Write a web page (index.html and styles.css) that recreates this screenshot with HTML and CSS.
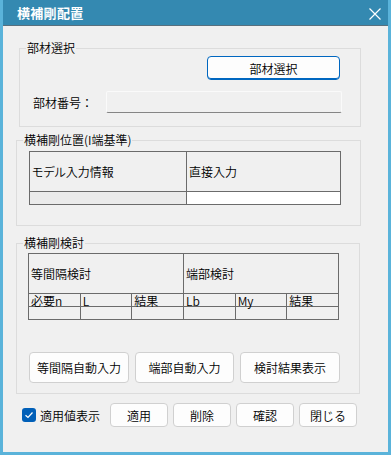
FILE: index.html
```html
<!DOCTYPE html>
<html lang="ja">
<head>
    <meta charset="UTF-8">
    <meta name="viewport" content="width=device-width, initial-scale=1.0">
    <title>横補剛配置</title>
    <link rel="stylesheet" href="styles.css">
</head>
<body>

<div class="window">
    <div class="title-bar">
        <span class="title">横補剛配置</span>
        <svg class="close-icon" width="12" height="12" viewBox="0 0 12 12">
            <path d="M0.5 0.5 L11.5 11.5 M11.5 0.5 L0.5 11.5" stroke="#fff" stroke-width="1.2" fill="none"/>
        </svg>
    </div>

    <div class="content">
        <fieldset class="group group-select">
            <legend>部材選択</legend>
            <button class="btn btn-primary btn-select">部材選択</button>
            <div class="field-row">
                <span class="field-label">部材番号：</span>
                <div class="text-box"></div>
            </div>
        </fieldset>

        <fieldset class="group group-position">
            <legend>横補剛位置(I端基準)</legend>
            <table class="grid grid-position">
                <tr class="head-row">
                    <td class="cell-left">モデル入力情報</td>
                    <td>直接入力</td>
                </tr>
                <tr class="data-row">
                    <td class="cell-left"></td>
                    <td class="cell-white"></td>
                </tr>
            </table>
        </fieldset>

        <fieldset class="group group-check">
            <legend>横補剛検討</legend>
            <table class="grid grid-check">
                <tr class="head-row">
                    <td colspan="3">等間隔検討</td>
                    <td colspan="3">端部検討</td>
                </tr>
                <tr class="sub-row">
                    <td class="w50">必要n</td>
                    <td class="w50">L</td>
                    <td>結果</td>
                    <td class="w50">Lb</td>
                    <td class="w50">My</td>
                    <td>結果</td>
                </tr>
                <tr class="data-row">
                    <td></td>
                    <td></td>
                    <td></td>
                    <td></td>
                    <td></td>
                    <td></td>
                </tr>
            </table>
            <div class="button-row">
                <button class="btn btn-wide">等間隔自動入力</button>
                <button class="btn btn-wide btn-mid">端部自動入力</button>
                <button class="btn btn-wide">検討結果表示</button>
            </div>
        </fieldset>

        <div class="footer">
            <label class="check-label">
                <span class="check-box">
                    <svg width="10" height="10" viewBox="0 0 10 10">
                        <path d="M1.5 5.2 L4 7.5 L8.5 2.5" stroke="#fff" stroke-width="1.2" fill="none"/>
                    </svg>
                </span>
                適用値表示
            </label>
            <button class="btn btn-small">適用</button>
            <button class="btn btn-small">削除</button>
            <button class="btn btn-small">確認</button>
            <button class="btn btn-small">閉じる</button>
        </div>
    </div>
</div>

</body>
</html>
```

FILE: styles.css
```css
body {
    margin: 0;
    background-color: #5ab3da;
    font-family: "Noto Sans CJK JP", "Noto Sans", sans-serif;
    font-size: 12px;
    font-weight: 350;
    color: #000;
}
.window {
    width: 391px;
    height: 455px;
    box-sizing: border-box;
    border-left: 3px solid #5ab3da;
    border-right: 3px solid #5ab3da;
    border-bottom: 3px solid #5ab3da;
    display: flex;
    flex-direction: column;
}
.title-bar {
    height: 25px;
    background-color: #3489b1;
    border-bottom: 1px solid #58707e;
    display: flex;
    align-items: center;
    justify-content: space-between;
    padding: 0 7px 0 14px;
}
.title {
    color: #fff;
    font-size: 13px;
    font-weight: bold;
    line-height: 14px;
    letter-spacing: 0.3px;
}
.close-icon {
    display: block;
    margin-top: 2px;
}
.content {
    flex: 1;
    background-color: #f0f0f0;
    display: flex;
    flex-direction: column;
    align-items: flex-start;
}
.group {
    margin: 0;
    padding: 0;
    border: 1px solid #dcdcdc;
    display: flex;
    flex-direction: column;
    box-sizing: border-box;
    min-width: 0;
}
.group legend {
    padding: 0 1px;
    margin-left: 6px;
    line-height: 14px;
    font-size: 12px;
}
.group-select {
    margin: 15px 0 0 16px;
    width: 342px;
    padding-bottom: 13px;
}
.group-position {
    margin: 6px 0 0 13px;
    width: 345px;
    padding-bottom: 20px;
}
.group-check {
    margin: 10px 0 0 13px;
    width: 344px;
    padding-bottom: 10px;
}
.btn {
    font-family: inherit;
    font-size: 12px;
    font-weight: inherit;
    background-color: #fdfdfd;
    border: 1px solid #d0d0d0;
    border-radius: 4px;
    padding: 0;
    color: #000;
    box-sizing: border-box;
}
.btn-primary {
    border: 1px solid #0067c0;
    box-shadow: inset 0 -1px 0 #0067c0;
}
.btn-select {
    width: 133px;
    height: 24px;
    margin: 1px 0 0 187px;
}
.field-row {
    display: flex;
    align-items: center;
    margin-top: 11px;
}
.field-label {
    width: 73px;
    padding-left: 13px;
}
.text-box {
    width: 236px;
    height: 22px;
    box-sizing: border-box;
    background-color: #f0f0f0;
    border: 1px solid #fafafa;
    border-bottom: 1px solid #858585;
    border-radius: 2px;
}
.grid {
    border-collapse: collapse;
    table-layout: fixed;
    font-feature-settings: "palt";
}
.grid td {
    border: 1px solid #6b6b6b;
    padding: 0 0 0 2px;
    line-height: 12px;
    background-color: #f0f0f0;
    white-space: nowrap;
}
.grid-position {
    width: 312px;
    margin: 4px 0 0 12px;
}
.grid-position .head-row td {
    height: 39px;
}
.grid-position .data-row td {
    height: 12px;
}
.grid-position .cell-left {
    width: 154px;
}
.grid-position .data-row .cell-left {
    background-color: #ebebeb;
}
.grid-position .cell-white {
    background-color: #fff;
}
.grid-check {
    width: 311px;
    margin: 3px 0 0 11px;
}
.grid-check .head-row td {
    height: 39px;
}
.grid-check .sub-row td {
    height: 12px;
    line-height: 11px;
    font-size: 12px;
    vertical-align: bottom;
}
.grid-check .data-row td {
    height: 12px;
}
.grid-check .w50 {
    width: 49px;
}
.button-row {
    display: flex;
    gap: 6px;
    margin: 32px 0 0 12px;
}
.btn-wide {
    width: 100px;
    height: 31px;
}
.btn-mid {
    width: 99px;
}
.footer {
    display: flex;
    align-items: center;
    gap: 5px;
    margin: 9px 0 0 19px;
}
.check-label {
    display: flex;
    align-items: center;
    gap: 4px;
    width: 83px;
}
.check-box {
    width: 14px;
    height: 14px;
    border-radius: 3px;
    background-color: #005fb8;
    display: flex;
    align-items: center;
    justify-content: center;
}
.btn-small {
    width: 58px;
    height: 24px;
}
```
